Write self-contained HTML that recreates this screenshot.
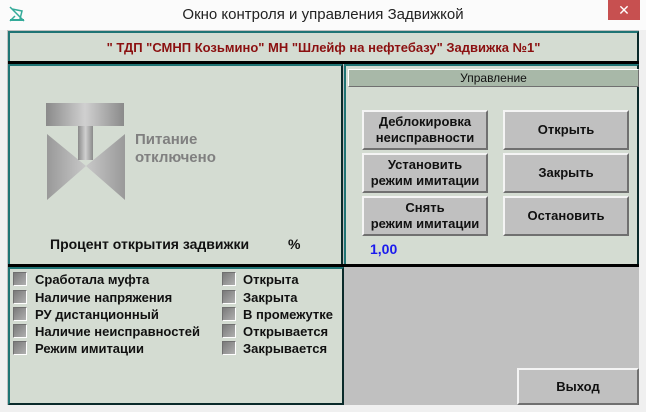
<!DOCTYPE html>
<html><head><meta charset="utf-8"><style>
*{margin:0;padding:0;box-sizing:border-box}
body{width:646px;height:412px;background:#f0f0f0;font-family:"Liberation Sans",sans-serif;position:relative;overflow:hidden}
.a{position:absolute}
.title{left:0;top:0;width:646px;height:30px;background:#fbfbfb;text-align:center;font-size:15px;line-height:30px;color:#222}
.close{left:608px;top:0;width:32px;height:20px;background:#c75050;color:#fff;text-align:center;font-size:14px;line-height:20px}
.client{left:7px;top:30px;width:632px;height:375px;background:#c0c0c0}
.pan{background:#d4dcd2;border:2px solid #1f7474;border-right-color:#0a2a2a;border-bottom-color:#0a2a2a}
.btn{background:#c0c0c0;border:2px solid;border-color:#f4f4f4 #707070 #707070 #f4f4f4;font-weight:bold;font-size:13px;text-align:center;display:flex;align-items:center;justify-content:center;line-height:16px;color:#111}
.cb{width:14px;height:14px;background:linear-gradient(135deg,#7a7a7a,#b0b0b0);border:1px solid;border-color:#707070 #fff #fff #707070}
.lb{font-weight:bold;font-size:13px;color:#111;white-space:nowrap}
</style></head><body>
<div class="a title">Окно контроля и управления Задвижкой</div>
<svg class="a" style="left:9px;top:6px" width="16" height="16" viewBox="0 0 16 16"><path d="M1 1L15 15M1 15L6 10M3 3L13 5L11 13" stroke="#3a9" stroke-width="1.5" fill="none"/><rect x="1" y="13" width="14" height="2" fill="#3a9"/></svg>
<div class="a close">✕</div>
<div class="a client"></div>
<div class="a pan" style="left:8px;top:31px;width:631px;height:31px;border-bottom:none;text-align:center;font-weight:bold;font-size:13px;line-height:29px;color:#8b1010">" ТДП "СМНП Козьмино" МН "Шлейф на нефтебазу" Задвижка №1"</div>
<div class="a" style="left:8px;top:61px;width:631px;height:3px;background:#000"></div>
<div class="a pan" style="left:8px;top:64px;width:335px;height:202px"></div>
<svg class="a" style="left:44px;top:100px" width="84" height="102" viewBox="0 0 84 102">
<defs><linearGradient id="g" x1="0" x2="1"><stop offset="0" stop-color="#8a8a8a"/><stop offset="0.5" stop-color="#d0d0d0"/><stop offset="1" stop-color="#8a8a8a"/></linearGradient>
<linearGradient id="h" x1="0" x2="1"><stop offset="0" stop-color="#999"/><stop offset="1" stop-color="#c8c8c8"/></linearGradient>
<linearGradient id="k" x1="0" x2="1"><stop offset="0" stop-color="#c8c8c8"/><stop offset="1" stop-color="#999"/></linearGradient></defs>
<rect x="2" y="3" width="78" height="23" fill="url(#g)"/>
<polygon points="3,34 42,66 3,100" fill="url(#h)"/>
<polygon points="81,34 42,66 81,100" fill="url(#k)"/>
<rect x="34" y="26" width="15" height="34" fill="url(#g)"/>
</svg>
<div class="a lb" style="left:135px;top:131px;font-size:15px;color:#808080;line-height:18px">Питание<br>отключено</div>
<div class="a lb" style="left:50px;top:236px;font-size:14px">Процент открытия задвижки</div>
<div class="a lb" style="left:288px;top:236px;font-size:14px">%</div>
<div class="a pan" style="left:344px;top:64px;width:295px;height:202px"></div>
<div class="a" style="left:348px;top:69px;width:291px;height:18px;background:#a8b8a8;border:1px solid;border-color:#fff #707070 #707070 #fff;text-align:center;font-size:12px;line-height:16px;color:#111">Управление</div>
<div class="a btn" style="left:362px;top:110px;width:126px;height:40px">Деблокировка<br>неисправности</div>
<div class="a btn" style="left:362px;top:153px;width:126px;height:40px">Установить<br>режим имитации</div>
<div class="a btn" style="left:362px;top:196px;width:126px;height:40px">Снять<br>режим имитации</div>
<div class="a btn" style="left:503px;top:110px;width:126px;height:40px">Открыть</div>
<div class="a btn" style="left:503px;top:153px;width:126px;height:40px">Закрыть</div>
<div class="a btn" style="left:503px;top:196px;width:126px;height:40px">Остановить</div>
<div class="a lb" style="left:370px;top:241px;color:#1a1aee;font-size:14px">1,00</div>
<div class="a" style="left:8px;top:264px;width:631px;height:3px;background:#000"></div>
<div class="a pan" style="left:8px;top:267px;width:336px;height:138px"></div>
<div class="a cb" style="left:13px;top:272px"></div><div class="a lb" style="left:35px;top:272px">Сработала муфта</div>
<div class="a cb" style="left:13px;top:290px"></div><div class="a lb" style="left:35px;top:290px">Наличие напряжения</div>
<div class="a cb" style="left:13px;top:307px"></div><div class="a lb" style="left:35px;top:307px">РУ дистанционный</div>
<div class="a cb" style="left:13px;top:324px"></div><div class="a lb" style="left:35px;top:324px">Наличие неисправностей</div>
<div class="a cb" style="left:13px;top:341px"></div><div class="a lb" style="left:35px;top:341px">Режим имитации</div>
<div class="a cb" style="left:222px;top:272px"></div><div class="a lb" style="left:243px;top:272px">Открыта</div>
<div class="a cb" style="left:222px;top:290px"></div><div class="a lb" style="left:243px;top:290px">Закрыта</div>
<div class="a cb" style="left:222px;top:307px"></div><div class="a lb" style="left:243px;top:307px">В промежутке</div>
<div class="a cb" style="left:222px;top:324px"></div><div class="a lb" style="left:243px;top:324px">Открывается</div>
<div class="a cb" style="left:222px;top:341px"></div><div class="a lb" style="left:243px;top:341px">Закрывается</div>
<div class="a btn" style="left:517px;top:368px;width:122px;height:37px">Выход</div>
</body></html>
